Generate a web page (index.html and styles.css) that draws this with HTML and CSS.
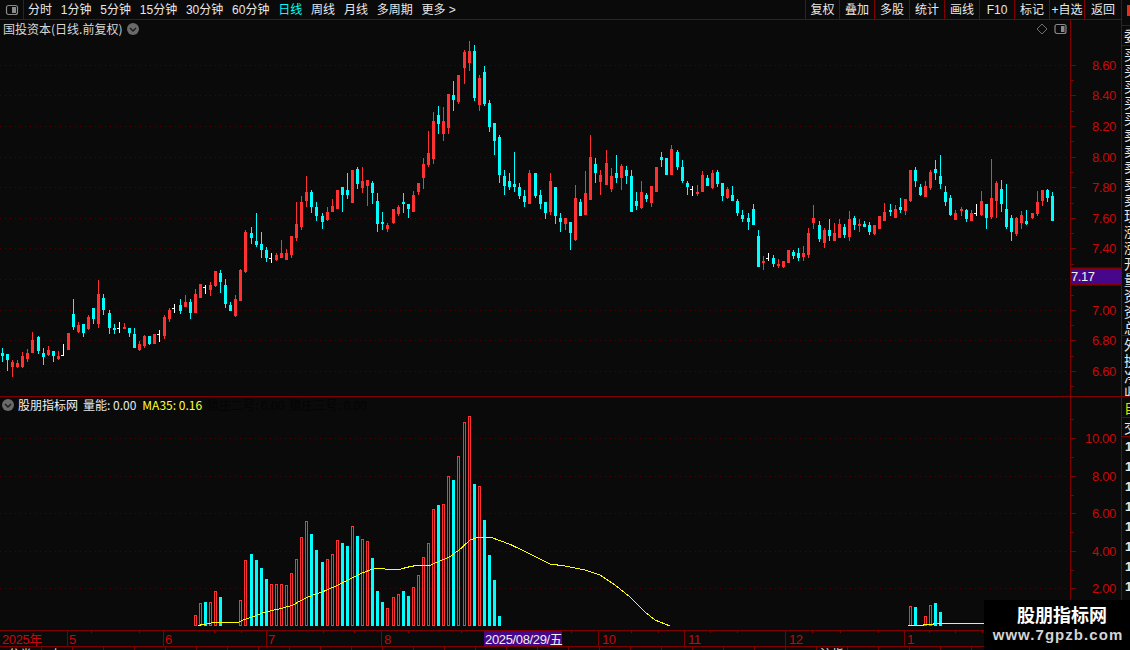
FILE: index.html
```html
<!DOCTYPE html>
<html lang="zh-CN">
<head>
<meta charset="utf-8">
<title>国投资本 日线</title>
<link rel="stylesheet" href="styles.css">
</head>
<body>
<div class="app">
  <div class="main-col">
    <header class="toolbar">
      <div class="panel-toggle">
        <svg width="14" height="12" viewBox="0 0 14 12"><rect class="ico-box" x="1.5" y="1.5" width="11" height="9" rx="2"/><rect class="ico-fill" x="7" y="3" width="4" height="6"/></svg>
      </div>
      <nav class="periods">
        <span>分时</span><span>1分钟</span><span>5分钟</span><span>15分钟</span><span>30分钟</span><span>60分钟</span><span class="active">日线</span><span>周线</span><span>月线</span><span>多周期</span><span>更多 &gt;</span>
      </nav>
      <nav class="actions">
        <span>复权</span><span>叠加</span><span>多股</span><span>统计</span><span>画线</span><span>F10</span><span>标记</span><span>+自选</span><span>返回</span>
      </nav>
    </header>

    <section class="panel price">
      <svg id="price" class="plot" width="1121" height="376" viewBox="0 20 1121 376"></svg>
      <div class="legend legend-price">
        <span>国投资本(日线.前复权)</span>
        <svg class="chev" width="12" height="12" viewBox="0 0 12 12"><circle class="chev-bg" cx="6" cy="6" r="6"/><path class="chev-line" d="M3 5l3 3 3-3"/></svg>
      </div>
      <div class="chart-tools">
        <svg width="12" height="12" viewBox="0 0 12 12"><path class="diamond" d="M6 1l5 5-5 5-5-5z"/></svg>
        <svg width="13" height="12" viewBox="0 0 13 12"><rect class="ico-box" x="1" y="1.5" width="11" height="9" rx="2"/><rect class="ico-fill" x="7" y="3" width="3.5" height="6"/></svg>
      </div>
    </section>

    <section class="panel volume">
      <svg id="volume" class="plot" width="1121" height="233" viewBox="0 397 1121 233"></svg>
      <div class="legend legend-volume">
        <svg class="chev" width="12" height="12" viewBox="0 0 12 12"><circle class="chev-bg" cx="6" cy="6" r="6"/><path class="chev-line" d="M3 5l3 3 3-3"/></svg>
        <span class="name">股朋指标网</span>
        <span>量能: 0.00</span>
        <span class="ma">MA35: 0.16</span>
        <span class="hidden-a">猎庄二号: 0.00</span>
        <span class="hidden-b">猎庄三号: 0.00</span>
      </div>
    </section>

    <section class="time-axis">
      <svg id="time" class="plot" width="1121" height="15" viewBox="0 631 1121 15"></svg>
    </section>

    <footer class="strip">
      <span class="s1">分类</span><span class="s2">上</span><span></span><span></span><span></span><span></span><span></span><span></span><span></span><span></span><span></span><span></span><span></span><span></span><span></span><span></span><span></span><span></span><span></span><span></span><span></span><span></span><span></span><span></span><span></span><span></span><span class="s3">沪指</span><span></span><span></span><span></span><span></span><span></span><span></span><span></span><span></span>
    </footer>
  </div>

  <aside class="side">
    <div class="side-top"><i class="red-mark"></i></div>
    <div class="side-head">委</div>
    <div class="side-list side-a">
      <span>买</span><span>买</span><span>买</span><span>买</span><span>买</span><span>卖</span><span>卖</span><span>卖</span><span>卖</span><span>卖</span><span>现</span><span>涨</span><span>涨</span><span>开</span><span>量</span><span>资</span><span>资</span><span>总</span>
    </div>
    <div class="side-list side-b">
      <span>外</span><span>换</span><span>净</span><span>收</span>
    </div>
    <div class="side-yellow">自</div>
    <div class="side-head2">交</div>
    <div class="side-nums">
      <span>1</span><span>1</span><span>1</span><span>1</span><span>1</span><span>1</span><span>1</span><span>1</span>
    </div>
  </aside>

  <div class="watermark">
    <div class="wm-title">股朋指标网</div>
    <div class="wm-url">www.7gpzb.com</div>
  </div>
</div>
<script src="script.js"></script>
</body>
</html>
```

FILE: styles.css
```css
* { box-sizing: border-box; }
html, body { margin: 0; padding: 0; background: #0a0a0a; }
body { font-family: "Liberation Sans", "Noto Sans CJK SC", sans-serif; color: #e8e8e8; }

.app { position: relative; display: flex; width: 1130px; height: 650px; overflow: hidden; background: #0a0a0a; }
.main-col { width: 1121px; display: flex; flex-direction: column; flex: none; }

/* toolbar */
.toolbar { display: flex; height: 20px; flex: none; align-items: stretch; border-bottom: 1px solid #800000; font-size: 12px; line-height: 20px; font-family: "Liberation Sans", "Noto Sans CJK SC", sans-serif; }
.panel-toggle { width: 24px; flex: none; display: flex; align-items: center; justify-content: center; border-right: 1px solid #800000; }
.periods { display: flex; flex: 1; padding-left: 4px; gap: 8.8px; white-space: nowrap; }
.periods span { height: 19px; }
.periods .active { color: #00ffff; }
.actions { display: flex; flex: none; }
.actions span { width: 35px; height: 19px; text-align: center; border-left: 1px solid #800000; white-space: nowrap; }
.actions span:first-child { width: 34px; }
.actions span:last-child { width: 37px; }

.ico-box { fill: none; stroke: #8a8a8a; stroke-width: 1.2; }
.ico-fill { fill: #8a8a8a; }

/* panels */
.panel { position: relative; flex: none; }
.price { height: 377px; border-bottom: 1px solid #800000; }
.volume { height: 233px; }
.plot { display: block; }

.legend { position: absolute; display: flex; align-items: center; white-space: nowrap; font-size: 12px; line-height: 16px; font-family: "Noto Sans CJK SC", sans-serif; }
.legend-price { left: 3px; top: 1px; gap: 5px; color: #d8d8d8; }
.legend-volume { left: 2px; top: 0; }
.legend-volume .name { margin-left: 4px; color: #f0f0f0; }
.legend-volume span:nth-of-type(2) { margin-left: 5px; }
.legend-volume .ma { margin-left: 6px; color: #ffff33; }
.legend-volume .hidden-a { margin-left: 5px; color: #040404; }
.legend-volume .hidden-b { margin-left: 5px; color: #040404; }
.chev { flex: none; }
.chev-bg { fill: #6a6a6a; }
.chev-line { fill: none; stroke: #1a1a1a; stroke-width: 1.4; }

.chart-tools { position: absolute; right: 54px; top: 3px; display: flex; gap: 6px; align-items: center; }
.diamond { fill: none; stroke: #6e6e6e; stroke-width: 1; }

/* svg marks */
.grid { stroke: #5a0000; stroke-width: 1; stroke-dasharray: 1 4; }
.axis { stroke: #800000; stroke-width: 1; }
.tick-label { fill: #c80808; font-size: 13px; letter-spacing: -0.3px; font-family: "Liberation Sans", sans-serif; text-anchor: end; dominant-baseline: central; }
.tag { fill: #46078a; }
.tag-label { fill: #f0f0f0; font-size: 13px; letter-spacing: -0.4px; font-family: "Liberation Sans", sans-serif; dominant-baseline: central; }
.tag-cjk { font-family: "Liberation Sans", "Noto Sans CJK SC", sans-serif; letter-spacing: -0.35px; }
.wick-r { stroke: #ff3232; stroke-width: 1; }
.wick-c { stroke: #00ffff; stroke-width: 1; }
.wick-w { stroke: #ffffff; stroke-width: 1; }
.body-r { fill: none; stroke: #ff3232; stroke-width: 1; }
.body-rs { fill: #ff3232; }
.body-c { fill: #00ffff; }
.ma-line { fill: none; stroke: #ffff00; stroke-width: 1; shape-rendering: crispEdges; }
.time-label { fill: #c80808; font-size: 13px; letter-spacing: -0.4px; font-family: "Liberation Sans", "Noto Sans CJK SC", sans-serif; dominant-baseline: central; }

/* time axis */
.time-axis { flex: none; height: 17px; border-top: 1px solid #800000; border-bottom: 1px solid #800000; }

/* clipped bottom strip */
.strip { flex: 1; display: flex; overflow: hidden; font-size: 12px; line-height: 14px; color: #eee; font-family: "Noto Sans CJK SC", sans-serif; white-space: nowrap; }
.strip span { flex: none; width: 31px; border-right: 1px solid #800000; padding-left: 5px; }
.strip .s1 { width: 42px; padding-left: 8px; }
.strip .s2 { width: 31px; padding-left: 8px; }
.strip .s3 { padding-left: 3px; overflow: visible; }

/* clipped right side column */
.side { flex: none; width: 9px; border-left: 1px solid #800000; display: flex; flex-direction: column; overflow: hidden; font-family: "Noto Sans CJK SC", sans-serif; font-size: 14px; color: #e8e8e8; white-space: nowrap; }
.side-top { height: 26px; flex: none; border-bottom: 1px solid #800000; padding: 5px 0 0 5px; }
.red-mark { display: block; width: 4px; height: 11px; background: #e03020; }
.side-head { height: 20px; flex: none; line-height: 19px; padding-left: 2px; border-bottom: 1px solid #800000; }
.side-list { display: flex; flex-direction: column; flex: none; padding-left: 2px; }
.side-list span { height: 16.1px; line-height: 16px; display: block; }
.side-a { height: 290px; border-bottom: 1px solid #800000; overflow: hidden; }
.side-b { height: 61px; border-bottom: 1px solid #800000; overflow: hidden; }
.side-yellow { height: 21px; flex: none; line-height: 20px; padding-left: 2px; color: #e0e000; border-bottom: 1px solid #800000; }
.side-head2 { height: 19px; flex: none; line-height: 18px; padding-left: 2px; border-bottom: 1px solid #800000; }
.side-nums { display: flex; flex-direction: column; padding-left: 3px; font-family: "Liberation Sans", sans-serif; font-weight: bold; font-size: 13px; }
.side-nums span { height: 20px; line-height: 20px; }

/* watermark overlay */
.watermark { position: absolute; right: 0; bottom: 0; width: 146px; height: 50px; background: #000; text-align: center; }
.wm-title { font-family: "Noto Sans CJK SC", sans-serif; font-weight: 700; font-size: 18px; line-height: 22px; margin-top: 3px; padding-left: 10px; color: #fff; }
.wm-url { font-family: "Liberation Sans", sans-serif; font-weight: 700; font-size: 15px; line-height: 18px; margin-top: 1px; padding-left: 2px; letter-spacing: 1.05px; color: #d4d4d4; white-space: nowrap; }
```

FILE: script.js
```js
var NS = "http://www.w3.org/2000/svg";
function el(parent, tag, attrs, text) {
  var n = document.createElementNS(NS, tag);
  for (var k in attrs) n.setAttribute(k, attrs[k]);
  if (text !== undefined) n.textContent = text;
  parent.appendChild(n);
  return n;
}
function candleX(i) { return 2 + 5 * i + Math.floor((i + 7) / 14); }

/* candles read from the chart: colour, wick top, body top, body bottom, wick bottom.
   each block stores values relative to its own origin at 3x scale. */
var blocks = [
  { y0: 260, rows: [
    ["c",264,279,288,306],["c",282,282,300,333],["r",300,306,318,351],["r",300,309,318,324],["r",277,289,318,324],
    ["r",267,279,294,306],["r",216,240,276,279],["c",228,231,273,282],["c",264,279,291,315],["r",258,270,282,288],
    ["c",273,273,288,306],["r",273,288,294,300],["w",252,284,284,288],["r",219,219,267,267],["c",117,162,201,210],
    ["r",186,195,213,219],["c",192,192,219,231],["r",165,171,204,210],["c",144,144,177,192],["r",60,102,189,204],
    ["c",102,114,150,165],["c",150,159,204,222],["c",192,204,210,222],["w",186,203,203,219],["s",189,201,207,207],
    ["c",204,204,219,231],["c",204,222,264,264],["r",243,252,267,273],["r",225,228,255,264],["c",228,228,252,255],
    ["r",222,222,249,252],["w",210,222,222,246],["r",165,171,225,237],["r",144,150,174,186],["w",132,145,145,159],
    ["c",117,135,153,162],["r",105,126,138,141],["c",117,126,159,177],["r",87,102,156,159],["r",72,72,111,114],
    ["w",75,81,81,102],["r",66,75,87,108],["r",33,33,75,81],["c",30,39,66,99],["c",57,75,132,144],
    ["c",126,135,153,153],["r",105,117,165,171],["r",27,30,120,123]
  ]},
  { y0: 130, rows: [
    ["r",300,306,423,429],["c",291,309,324,342],["c",249,333,345,351],["c",306,342,360,384],["c",351,360,385,396],
    ["w",369,385,385,399],["r",370,375,387,393],["r",330,370,380,385],["r",357,370,386,388],["r",318,318,372,384],
    ["r",216,282,321,333],["r",198,216,288,300],["r",138,186,210,231],["c",180,186,231,249],["c",216,231,258,273],
    ["c",249,258,276,297],["r",231,246,267,273],["r",207,228,243,246],["r",180,180,234,237],["c",171,171,195,246],
    ["c",129,180,195,207],["r",120,120,216,216],["c",111,117,162,177],["r",111,153,171,189],["r",150,150,165,228],
    ["c",153,159,189,222],["c",189,213,282,306],["c",246,276,282,300],["r",279,285,294,306],["r",237,237,276,282],
    ["r",225,231,249,258],["c",189,216,222,249],["c",222,222,237,264],["r",183,195,243,243],["r",159,159,183,195],
    ["r",84,102,141,177],["r",3,69,102,111]
  ]},
  { y0: 90, rows: [
    ["r",66,93,204,222],["c",48,75,102,132]
  ]},
  { y0: 30, rows: [
    ["r",231,273,309,333],["r",192,192,291,312],["c",153,195,210,243],["r",135,135,213,222],["r",60,66,111,162],
    ["r",33,63,96,123],["c",45,63,204,213],["r",135,144,222,243],["c",108,126,222,228],["c",210,219,291,306],
    ["c",279,279,333,375],["c",315,321,435,459],["c",420,438,468,495],["c",429,453,471,480],["c",366,462,471,486],
    ["c",459,471,498,507],["c",480,498,516,531],["r",420,429,519,522],["c",429,429,498,504],["c",480,495,522,537],
    ["c",516,516,549,567],["r",429,453,543,555],["c",471,471,558,582],["c",549,564,576,606],["r",564,564,579,600],
    ["c",576,576,609,660],["r",465,504,627,633],["c",507,516,558,558],["r",423,489,552,555],["r",315,381,507,507],
    ["c",384,402,429,459],["r",420,435,453,495],["r",360,399,462,462],["r",414,438,474,486],["c",375,429,444,459],
    ["r",402,408,441,480],["c",408,420,438,462],["c",420,438,546,546],["c",486,513,528,540],["r",453,486,531,537],
    ["c",489,495,507,516],["r",468,468,516,531],["r",411,411,483,483],["c",366,381,390,411],["c",384,384,435,435],
    ["r",345,357,432,435],["c",360,366,411,420],["c",390,411,453,459],["c",453,459,471,495],["w",468,478,478,498],
    ["s",465,486,492,498]
  ]},
  { y0: 140, rows: [
    ["r",93,105,153,156],["c",105,114,138,138],["r",90,99,141,147],["c",90,96,132,141],["c",129,129,168,183],
    ["r",141,147,171,177],["c",138,165,183,183],["c",177,183,219,228],["c",210,225,237,246],["c",219,234,246,270],
    ["c",192,207,255,255],["c",270,288,381,381],["s",348,363,369,390],["w",339,354,354,363],["c",345,354,372,381],
    ["s",357,372,378,384],["r",363,363,378,384],["r",330,330,366,366],["c",330,336,348,357],["c",324,339,354,363],
    ["r",318,339,348,363],["r",264,279,342,354],["r",195,234,246,267],["c",243,255,297,306],["r",264,270,306,324],
    ["c",237,270,288,303],["r",249,279,300,300],["r",237,252,291,294],["c",252,261,285,294],["r",213,237,288,303],
    ["c",228,234,255,270],["s",237,252,258,276],["c",243,252,261,261],["c",246,255,276,285],["r",255,255,279,285],
    ["r",228,228,264,267],["r",189,216,240,243],["c",192,210,216,228],["r",195,207,231,231],["c",174,201,210,219],
    ["r",177,177,210,225],["r",90,90,180,186],["c",81,90,123,141],["c",132,141,165,168],["r",123,138,168,168],
    ["r",90,96,141,150],["c",60,87,99,120],["c",45,108,132,147],["c",138,156,186,198],["c",165,174,225,228],
    ["r",210,219,237,237],["s",201,207,213,228],["c",207,210,237,246],["r",210,219,240,240],["w",192,219,219,228],
    ["r",153,183,222,228],["c",192,192,234,267],["r",57,174,228,237],["r",123,129,180,234],["c",120,147,192,216],
    ["c",132,207,261,267],["c",225,234,276,303],["r",231,234,279,288],["r",213,225,246,267],["c",210,243,252,255],
    ["r",219,219,231,237],["r",153,186,219,228],["r",150,150,180,198],["c",147,150,174,186],["c",156,168,243,243]
  ]}
];

var priceSvg = document.getElementById("price");
var volSvg = document.getElementById("volume");
var timeSvg = document.getElementById("time");

/* price grid */
var priceLines = [65, 95, 126, 157, 187, 218, 248, 279, 310, 340, 371];
priceLines.forEach(function (y) {
  el(priceSvg, "line", { "class": "grid", x1: 0, x2: 1070, y1: y + 0.5, y2: y + 0.5 });
});

/* candles */
var idx = 0;
blocks.forEach(function (b) {
  b.rows.forEach(function (r) {
    var c = candleX(idx++), k = r[0];
    var wt = Math.round(b.y0 + r[1] / 3), bt = Math.round(b.y0 + r[2] / 3),
        bb = Math.round(b.y0 + r[3] / 3), wb = Math.round(b.y0 + r[4] / 3);
    var wickClass = k === "c" ? "wick-c" : k === "w" ? "wick-w" : "wick-r";
    el(priceSvg, "line", { "class": wickClass, x1: c + 0.5, x2: c + 0.5, y1: wt, y2: wb });
    if (k === "w") {
      el(priceSvg, "line", { "class": wickClass, x1: c - 2, x2: c, y1: bt + 0.5, y2: bt + 0.5 });
    } else if (k === "r") {
      el(priceSvg, "rect", { "class": "body-r", x: c - 0.5, y: bt + 0.5, width: 2, height: Math.max(1, bb - bt) });
    } else if (k === "s") {
      el(priceSvg, "rect", { "class": "body-rs", x: c - 1, y: bt, width: 3, height: Math.max(2, bb - bt) });
    } else {
      el(priceSvg, "rect", { "class": "body-c", x: c - 1, y: bt, width: 3, height: Math.max(2, bb - bt) });
    }
  });
});

/* axes */
function axis(svg, top, bottom, labels, minors) {
  el(svg, "line", { "class": "axis", x1: 1070.5, x2: 1070.5, y1: top, y2: bottom });
  labels.forEach(function (l) {
    el(svg, "line", { "class": "axis", x1: 1071, x2: 1076, y1: l[1] + 0.5, y2: l[1] + 0.5 });
    el(svg, "text", { "class": "tick-label", x: 1116, y: l[1] + 0.5 }, l[0]);
  });
  minors.forEach(function (y) {
    el(svg, "line", { "class": "axis", x1: 1071, x2: 1074, y1: y + 0.5, y2: y + 0.5 });
  });
}
axis(priceSvg, 20, 396, [
  ["8.60", 65], ["8.40", 95], ["8.20", 126], ["8.00", 157], ["7.80", 187], ["7.60", 218], ["7.40", 248],
  ["7.00", 310], ["6.80", 340], ["6.60", 371]
], [80, 111, 141, 172, 203, 233, 264, 295, 325, 356, 386]);

el(priceSvg, "rect", { "class": "axis", x: 1071, y: 268, width: 50, height: 17, fill: "#800000" });
el(priceSvg, "rect", { "class": "tag", x: 1071, y: 269, width: 50, height: 15 });
el(priceSvg, "text", { "class": "tag-label", x: 1071, y: 276.5 }, "7.17");

/* volume grid and axis */
[438, 476, 513, 551, 588].forEach(function (y) {
  el(volSvg, "line", { "class": "grid", x1: 0, x2: 1070, y1: y + 0.5, y2: y + 0.5 });
});
axis(volSvg, 397, 630, [
  ["10.00", 438], ["8.00", 476], ["6.00", 513], ["4.00", 551], ["2.00", 588]
], [419, 457, 495, 532, 570, 607]);

/* volume bars */
var volA = [["r",345],["r",309],["c",306],["r",306],["r",273],["c",291],null,null,null,["r",300],["r",180],
  ["c",162],["c",180],["c",204],["c",237],["r",252],["r",252],["r",252],["r",255],["r",219],["r",177],["r",111],["r",63],
  ["c",102],["c",150],["c",186],["r",177],["r",162],["r",120],["c",129],["c",138],["r",78],["c",108],["r",117],["r",123],
  ["c",174],["c",273],["c",306],["r",324],["r",291],["r",282],["c",273],["c",288],["r",261],["r",225],["r",171],["r",129]];
var volB = [["r",509],["c",505],["r",504],["r",476],["c",480],["r",456],["r",422],["r",416],["c",484],["r",486],
  ["c",520],["c",555],["c",580],["c",616]];
var BASE = 626;
function bar(x, top, kind) {
  if (kind === "r") el(volSvg, "rect", { "class": "body-r", x: x - 0.5, y: top + 0.5, width: 2, height: BASE - top - 1 });
  else el(volSvg, "rect", { "class": "body-c", x: x - 1, y: top, width: 3, height: BASE - top });
}
volA.forEach(function (v, n) { if (v) bar(candleX(38 + n), Math.round(500 + v[1] / 3), v[0]); });
volB.forEach(function (v, n) { bar(candleX(85 + n), v[1], v[0]); });
[[910,606,"r"],[915,607,"c"],[925,616,"r"],[930,605,"r"],[935,603,"c"],[940,612,"c"]].forEach(function (v) {
  bar(v[0], v[1], v[2]);
});

/* MA35 line */
var ma = [[198,625.5],[203,624.5],[213,622.7],[238,622.3],[243,620],[253,616.7],[263,612.7],[273,610.3],[283,608],[293,605],
  [303,599.3],[313,595],[323,591.7],[333,587.3],[343,582.7],[353,577.3],[363,572.7],[372,569.3],[380,568.3],[387,569.3],
  [400,569.3],[407,567.3],[417,565.3],[430,565.3],[440,561],[450,556.7],[460,549.3],[470,540],[477,537.7],[492,537.7],
  [500,540.7],[510,544.3],[530,554],[550,564],[565,566],[585,570],[600,575],[615,585],[630,597],[645,612],[655,620],[670,626]];
el(volSvg, "polyline", { "class": "ma-line", points: ma.map(function (p) { return p.join(","); }).join(" ") });
el(volSvg, "polyline", { "class": "ma-line", points: "908,625.5 923,625.5 923,624.5 933,624.5 933,623.5 1070,623.5" });

/* time axis */
[[2, "2025年", 0], [68, "5", 67], [164, "6", 163], [267, "7", 266], [383, "8", 381], [601, "10", 598], [687, "11", 684], [788, "12", 785], [906, "1", 904]].forEach(function (t) {
  if (t[2]) el(timeSvg, "line", { "class": "axis", x1: t[2] + 0.5, x2: t[2] + 0.5, y1: 631, y2: 646 });
  el(timeSvg, "text", { "class": "time-label", x: t[0] + (t[2] ? 1 : 0), y: 639 }, t[1]);
});
[91, 139, 214, 241, 323, 354, 408, 461, 571, 631, 658, 710, 737, 812, 840, 878, 929, 955, 982, 1010, 1040].forEach(function (x) {
  el(timeSvg, "line", { "class": "axis", x1: x + 0.5, x2: x + 0.5, y1: 631, y2: 633 });
});
el(timeSvg, "line", { "class": "axis", x1: 1070.5, x2: 1070.5, y1: 631, y2: 646 });
el(timeSvg, "rect", { "class": "tag", x: 484, y: 631, width: 78, height: 15 });
el(timeSvg, "text", { "class": "tag-label tag-cjk", x: 485, y: 639 }, "2025/08/29/五");
```
